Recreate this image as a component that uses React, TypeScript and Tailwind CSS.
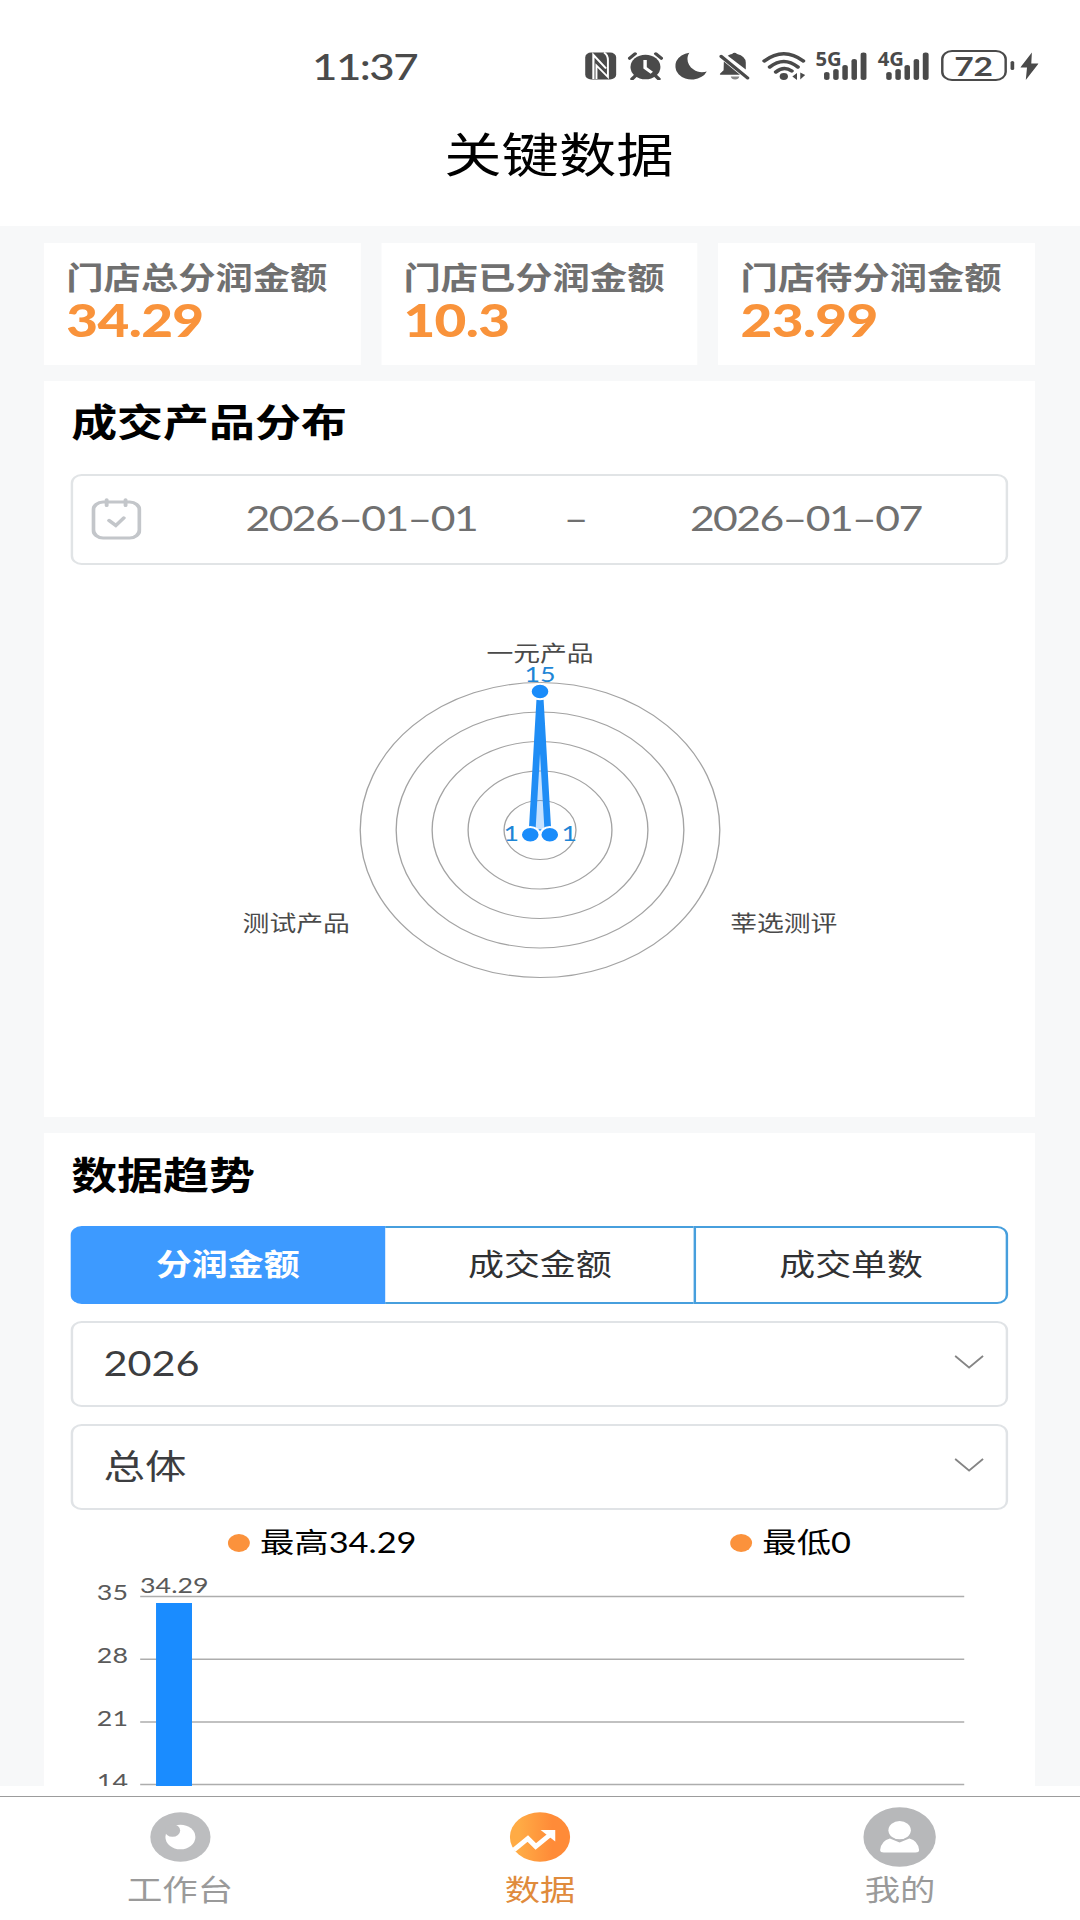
import type { ReactNode } from 'react';

interface SummaryItem {
  label: string;
  value: string;
}

const SUMMARY: SummaryItem[] = [
  { label: '门店总分润金额', value: '34.29' },
  { label: '门店已分润金额', value: '10.3' },
  { label: '门店待分润金额', value: '23.99' },
];

const METRIC_TABS = ['分润金额', '成交金额', '成交单数'];
const AXIS_TICKS = [35, 28, 21, 14];
const TICK_GAP = 62.7;

function SignalIcon({ label }: { label: string }) {
  return (
    <svg className="overflow-visible" width="40.8" height="28" viewBox="0 0 40.8 28" fill="#4a4a4a">
      <text
        x="-1"
        y="13.5"
        fontSize="19"
        fontWeight="700"
        textLength="21.5"
        lengthAdjust="spacingAndGlyphs"
        className="font-['Open_Sans',sans-serif]"
      >
        {label}
      </text>
      <rect x="6" y="20" width="4.5" height="8" rx="2.2" />
      <rect x="13.5" y="17" width="4.5" height="11" rx="2.2" />
      <rect x="21" y="13" width="4.5" height="15" rx="2.2" />
      <rect x="28.5" y="7" width="4.5" height="21" rx="2.2" />
      <rect x="36" y="0.5" width="4.8" height="27.5" rx="2.2" />
    </svg>
  );
}

function StatusBar() {
  return (
    <div className="flex h-[66px] items-center pt-[65px] text-[#4a4a4a]">
      <div className="ml-[256px] w-[224px] text-[36px] leading-none font-medium tracking-[-1.3px]">11:37</div>
      <div className="flex items-center gap-[9.8px]">
        <svg width="25.5" height="28" viewBox="0 0 25.5 28">
          <rect y="0.5" width="25.5" height="27" rx="5" fill="#4a4a4a" />
          <path d="M6.8 27V3L17.2 16.5" fill="none" stroke="#fff" strokeWidth="1.8" />
          <path d="M15.5 0.5Q18.7 3 18.7 8V25L9.3 13.5V27" fill="none" stroke="#fff" strokeWidth="1.6" />
        </svg>
        <svg width="29" height="28" viewBox="0 0 29 28">
          <circle cx="14.5" cy="15" r="12.3" fill="#4a4a4a" />
          <path d="M1.5 6.3L6 1.8M27.5 6.3L23 1.8M6.5 23.5L3.5 27M22.5 23.5l3 3.5" stroke="#4a4a4a" strokeWidth="3" strokeLinecap="round" />
          <path d="M14.2 8v7.8l5.5 5" fill="none" stroke="#fff" strokeWidth="2.8" />
        </svg>
        <svg width="26" height="28" viewBox="0 0 26 28">
          <path d="M11.5 0.7A13.5 13.5 0 1 0 25.8 19.4C22.5 20.7 18 20.4 15 17.6C10 13.5 8.5 6.5 11.5 0.7Z" fill="#4a4a4a" />
        </svg>
        <svg width="25" height="28" viewBox="0 0 25 28" fill="#4a4a4a">
          <path d="M3.8 9.5L17 22.8H1.2Q0 22.8 0.8 21.5L3.6 18.2Z" />
          <path d="M7 3.8Q9 2.2 10.5 2Q12.5 -0.6 14.7 2Q21.5 4 21.8 10.5V17.5Z" />
          <path d="M9.5 24.5h7q-0.5 3-3.5 3t-3.5-3Z" opacity="0.65" />
          <path d="M1.6 4.4L23.3 26" stroke="#4a4a4a" strokeWidth="3" strokeLinecap="round" />
        </svg>
        <svg width="36" height="28" viewBox="0 0 36 28" fill="none" stroke="#4a4a4a" strokeWidth="3.3" strokeLinecap="round">
          <path d="M2 9Q18 -5.5 34 9M6.5 15Q18 4 29.5 15M11.5 20Q18 13.5 24.5 19" />
          <circle cx="18" cy="24.5" r="3.4" fill="#4a4a4a" stroke="none" />
          <path d="M25 24.5L28.8 21V28ZM35.5 23L31.5 20.5V27.5Z" fill="#4a4a4a" stroke="none" />
        </svg>
        <SignalIcon label="5G" />
        <SignalIcon label="4G" />
        <div className="flex items-center gap-[3px]">
          <div className="flex h-[31px] w-[54px] items-center justify-center rounded-[9px] border-2 border-[#4a4a4a] text-[27.5px] leading-none font-bold">
            72
          </div>
          <div className="h-[9px] w-[3px] rounded-sm bg-[#4a4a4a]" />
          <svg className="ml-[2px]" width="15" height="28" viewBox="0 0 15 28">
            <path d="M9.5 0.5L0 15.5H5.5L4.5 28L15 11.5H9Z" fill="#4a4a4a" />
          </svg>
        </div>
      </div>
    </div>
  );
}

function SummaryCard({ label, value }: SummaryItem) {
  return (
    <div className="h-[122px] flex-1 bg-white pt-[17px] pl-[18px]">
      <div className="text-[30.6px] leading-[36px] font-bold whitespace-nowrap text-[#707070]">{label}</div>
      <div className="text-[45px] leading-[48px] font-black tracking-[-0.5px] text-[#f9933b]">{value}</div>
    </div>
  );
}

function CalendarIcon() {
  return (
    <svg className="mt-[2px]" width="41" height="42" viewBox="0 0 41 42" fill="none" stroke="#c3c6ca" strokeWidth="3.2" strokeLinecap="round">
      <rect x="1.6" y="4" width="37.8" height="36" rx="8" />
      <path d="M12.5 1.8V7.5M28 1.8V7.5M14.5 22.5L20 27.5L26.5 20" />
    </svg>
  );
}

function DateRange() {
  return (
    <div className="flex h-[91px] items-center rounded-[9px] border-2 border-[#e1e4e6] pb-[4px] pl-[14.5px] text-[35px] text-[#707070]">
      <CalendarIcon />
      <div className="ml-[80.5px] w-[200px] text-center tracking-[-1.3px] whitespace-nowrap">2026–01–01</div>
      <div className="flex-1 pr-[12px] text-center">–</div>
      <div className="mr-[64px] w-[200px] text-center tracking-[-1.3px] whitespace-nowrap">2026–01–07</div>
    </div>
  );
}

function RadarChart() {
  return (
    <svg className="mt-[55px]" width="768" height="400" viewBox="-385 -210 768 400" fontSize="22" textAnchor="middle">
      {[1, 2, 3, 4, 5].map((ring) => (
        <circle key={ring} r={ring * 29.5} fill="none" stroke="#a3a3a3" strokeWidth="1.1" />
      ))}
      <path d="M0 -134L-6.5 2H6.5Z" fill="#1a8cff" fillOpacity="0.25" stroke="#1f8df5" strokeWidth="5.5" strokeLinejoin="bevel" />
      <g fill="#1a8cfa" stroke="#fff" strokeWidth="2">
        <circle cy="-138.5" r="7.8" />
        <circle cx="-8" cy="4.7" r="7.8" />
        <circle cx="8" cy="4.7" r="7.8" />
      </g>
      <g fill="#1e86d6">
        <text y="-148.5">15</text>
        <text x="-23.5" y="11">1</text>
        <text x="24" y="11">1</text>
      </g>
      <g fill="#4a4a4a">
        <text y="-169">一元产品</text>
        <text x="-200" y="101">测试产品</text>
        <text x="200" y="101">莘选测评</text>
      </g>
    </svg>
  );
}

function MetricTabs() {
  return (
    <div className="flex h-[78px] text-[29.5px] text-[#303133]">
      <div className="flex w-[258px] items-center justify-center rounded-l-[9px] bg-[#3d9aff] pr-[1px] font-bold text-white">
        {METRIC_TABS[0]}
      </div>
      <div className="flex w-[253px] items-center justify-center border-y-2 border-[#479fdd]">{METRIC_TABS[1]}</div>
      <div className="flex flex-1 items-center justify-center rounded-r-[9px] border-2 border-[#479fdd]">
        {METRIC_TABS[2]}
      </div>
    </div>
  );
}

function SelectField({ children }: { children: ReactNode }) {
  return (
    <div className="flex h-[86px] items-center justify-between rounded-[9px] border-2 border-[#e0e3e6] pr-[18px] pb-[3px] pl-[24.5px] text-[34px] text-[#3c3d40]">
      <span>{children}</span>
      <svg width="24" height="14" viewBox="0 0 24 14" fill="none" stroke="#858585" strokeWidth="1.7">
        <path d="M0.5 0.8L12 12.5L23.5 0.8" />
      </svg>
    </div>
  );
}

function LegendItem({ children }: { children: ReactNode }) {
  return (
    <div className="flex items-center gap-[8px]">
      <span className="size-[18px] rounded-full bg-[#fb923c]" />
      <span>{children}</span>
    </div>
  );
}

function BarChart() {
  return (
    <svg className="mt-[5px]" width="768" height="240" viewBox="0 0 768 240" fontSize="22" fill="#5a5a5a">
      {AXIS_TICKS.map((tick, index) => (
        <g key={tick}>
          <line x1="57" x2="733" y1={28.5 + index * TICK_GAP} y2={28.5 + index * TICK_GAP} stroke="#adadad" strokeWidth="1.5" />
          <text x="47" y={32.5 + index * TICK_GAP} textAnchor="end">
            {tick}
          </text>
        </g>
      ))}
      <rect x="70" y="35" width="29.5" height="205" fill="#1a8cff" />
      <text x="85" y="25.5" textAnchor="middle">
        34.29
      </text>
    </svg>
  );
}

function TabItem({ label, active = false, children }: { label: string; active?: boolean; children: ReactNode }) {
  return (
    <div className="flex flex-1 flex-col items-center pt-[10px]">
      <div className="flex h-[60px] items-center">{children}</div>
      <span className={`mt-[5px] text-[29px] leading-[36px] ${active ? 'text-[#e08b3c]' : 'text-[#9a9a9a]'}`}>{label}</span>
    </div>
  );
}

function TabBar() {
  return (
    <div className="mt-[10px] flex h-[124px] border-t border-[#9c9c9c]">
      <TabItem label="工作台">
        <svg width="50" height="50" viewBox="0 0 50 50">
          <circle cx="25" cy="25" r="24.7" fill="#bcbdbf" />
          <circle cx="25" cy="25" r="12.3" fill="#fff" />
          <circle cx="18.5" cy="18.5" r="6.3" fill="#bcbdbf" />
        </svg>
      </TabItem>
      <TabItem label="数据" active>
        <svg width="50" height="50" viewBox="0 0 50 50">
          <defs>
            <linearGradient id="trend" x1="0" x2="1">
              <stop offset="0.15" stopColor="#ffab45" />
              <stop offset="0.7" stopColor="#ff8b38" />
            </linearGradient>
          </defs>
          <circle cx="25" cy="25" r="24.7" fill="url(#trend)" />
          <path d="M3.5 38L15 26.5L21.5 34.5L34 22" fill="none" stroke="#fff" strokeWidth="4.5" />
          <path d="M25.5 18H37.5V29.5Z" fill="#fff" />
        </svg>
      </TabItem>
      <TabItem label="我的">
        <svg width="60" height="60" viewBox="0 0 60 60">
          <circle cx="30" cy="30" r="29.7" fill="#b7b8ba" />
          <path d="M22 31.5L30 35.5L38 31.5Q45 33.5 46 43Q46 45.5 43 45.5H17Q14 45.5 14 43Q15 33.5 22 31.5Z" fill="#fff" />
          <circle cx="30" cy="23.3" r="9.2" fill="#fff" />
          <path d="M24.5 31.2Q30 34 35.5 31.2L30 34.7Z" fill="#b7b8ba" />
        </svg>
      </TabItem>
    </div>
  );
}

export default function App() {
  return (
    <div className="h-[1920px] w-[1080px] overflow-hidden bg-white">
      <div className="h-[1920px] w-[886px] origin-top-left scale-x-[1.219] font-[Lato,'Noto_Sans_CJK_SC',sans-serif]">
        <header className="h-[226px]">
          <StatusBar />
          <h1 className="mt-[54.5px] pl-[31px] text-center text-[47px] leading-[66px] text-black">关键数据</h1>
        </header>

        <main className="h-[1560px] overflow-hidden bg-[#f7f8f9] pt-[16.5px] pr-[37px] pl-[36.4px]">
          <div className="flex gap-[17px]">
            {SUMMARY.map((item) => (
              <SummaryCard key={item.label} {...item} />
            ))}
          </div>

          <section className="mt-[16.5px] h-[736px] bg-white px-[22px] pt-[16px]">
            <h2 className="text-[37.7px] leading-[50px] font-bold text-black">成交产品分布</h2>
            <div className="mt-[27px]">
              <DateRange />
            </div>
            <RadarChart />
          </section>

          <section className="mt-[15.5px] h-[700px] bg-white px-[22px] pt-[17.5px]">
            <h2 className="text-[37.7px] leading-[50px] font-bold text-black">数据趋势</h2>
            <div className="mt-[25.5px] flex flex-col gap-[17px]">
              <MetricTabs />
              <SelectField>2026</SelectField>
              <SelectField>总体</SelectField>
            </div>
            <div className="mt-[13px] flex h-[40px] items-center justify-around text-[28.2px] text-black">
              <LegendItem>最高34.29</LegendItem>
              <LegendItem>最低0</LegendItem>
            </div>
            <BarChart />
          </section>
        </main>

        <TabBar />
      </div>
    </div>
  );
}
